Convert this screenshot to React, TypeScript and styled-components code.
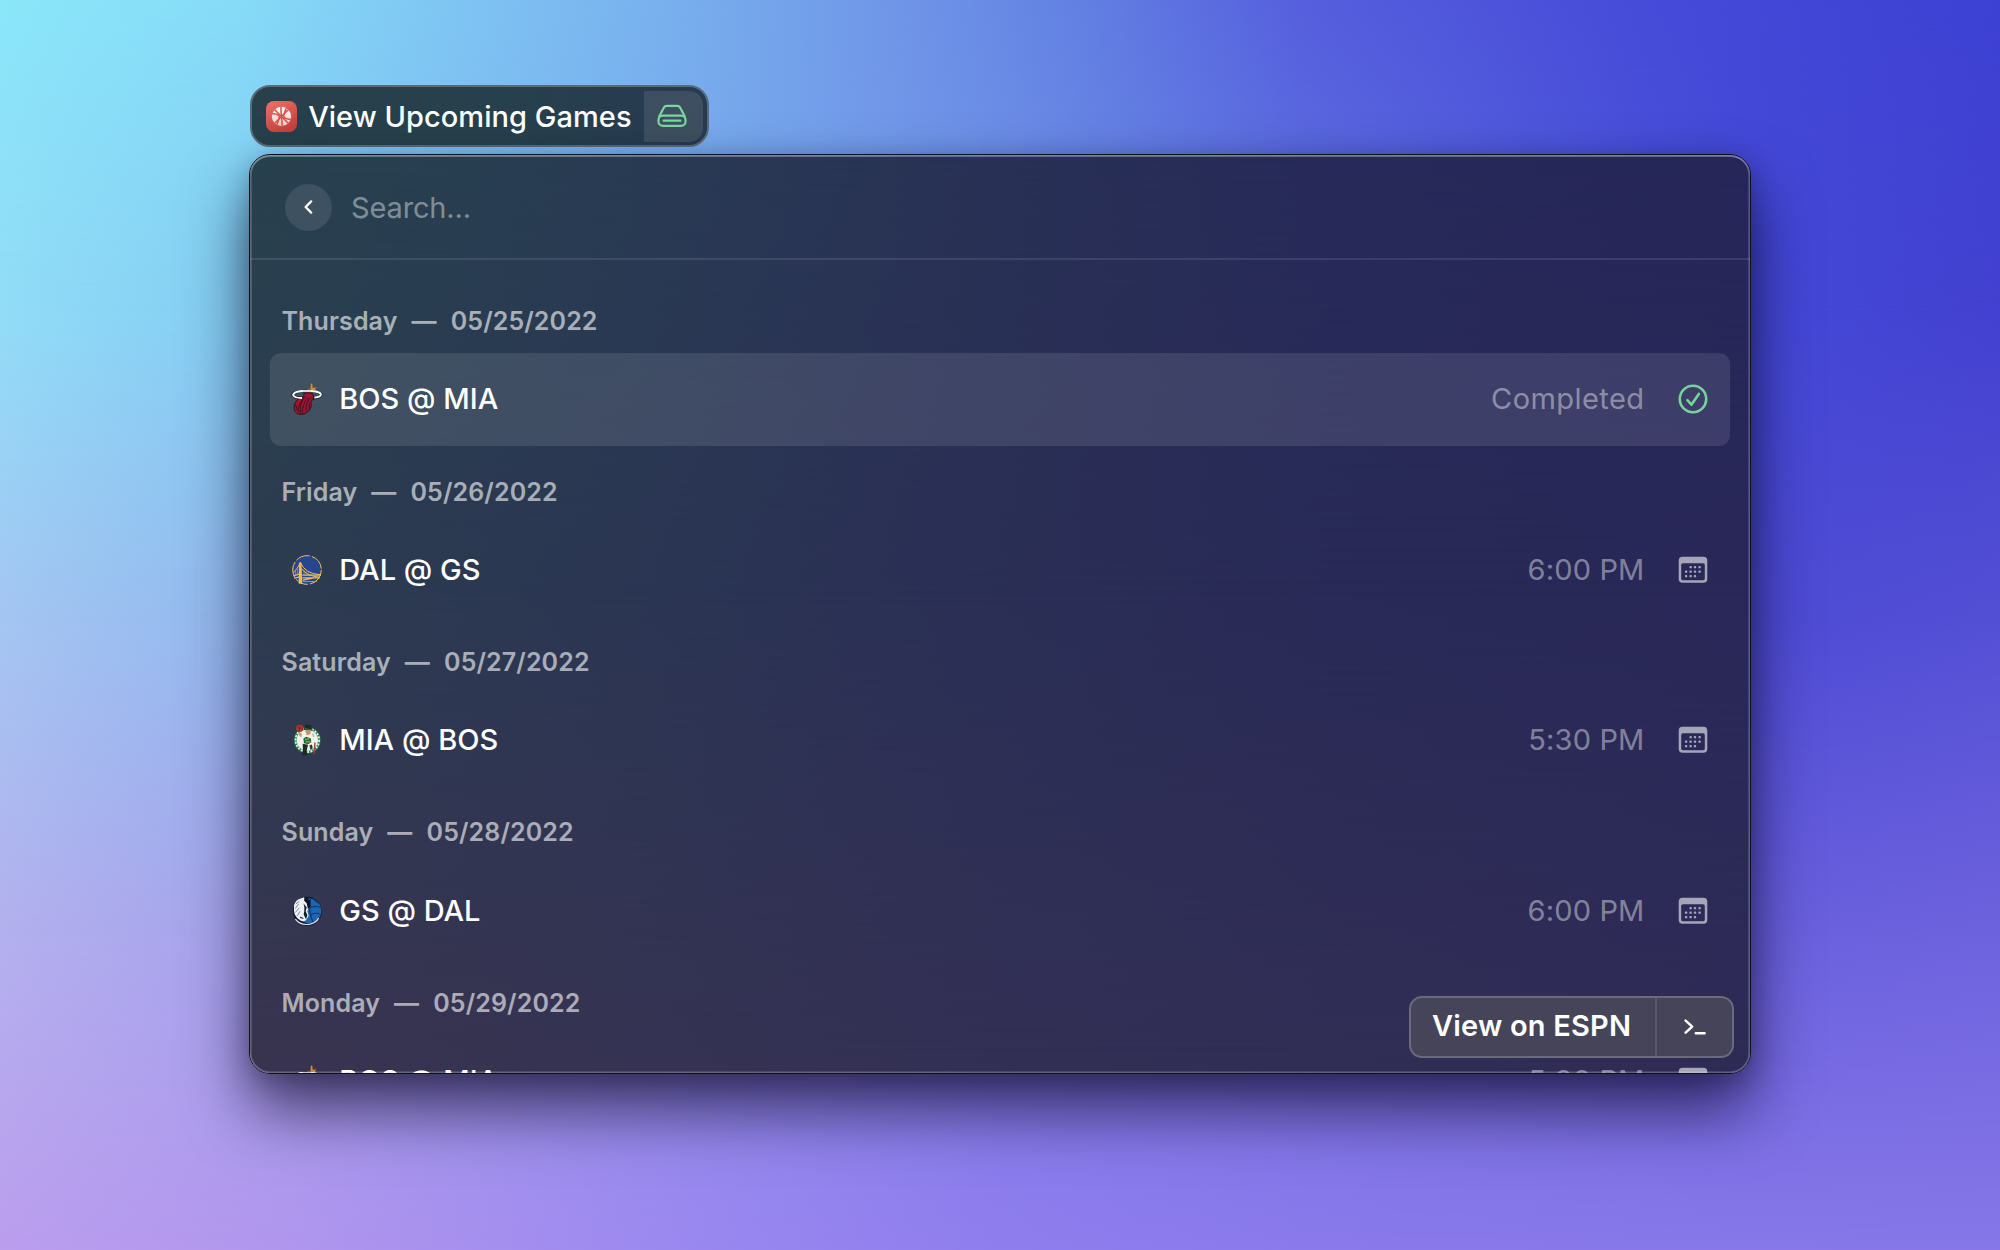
import React from "react";
import styled, { createGlobalStyle } from "styled-components";

const GlobalStyle = createGlobalStyle`
  *, *::before, *::after { box-sizing: border-box; }
  html, body { margin: 0; padding: 0; }
  body {
    font-family: Inter, "Liberation Sans", sans-serif;
    -webkit-font-smoothing: antialiased;
    background: #4f4bd3;
  }
`;

/* ---------- colour mesh ---------- */

type MeshStop = { at: number; colors: string };

/* Each band is a horizontal gradient that is solid down to its own height and fades into the band beneath it. */
const MeshLayer = styled.div<{ $colors: string; $from: number; $to: number }>`
  position: absolute;
  inset: 0;
  background: linear-gradient(90deg, ${(p) => p.$colors});
  mask-image: ${(p) =>
    p.$to > 100 ? "none" : `linear-gradient(180deg, #000 ${p.$from}%, transparent ${p.$to}%)`};
`;

const MeshBox = styled.div<{ $radius: number }>`
  position: absolute;
  inset: 0;
  z-index: -1;
  overflow: hidden;
  border-radius: ${(p) => p.$radius}px;
`;

function Mesh({ stops, radius = 0 }: { stops: MeshStop[]; radius?: number }) {
  const layers = stops.map((s, i) => ({ ...s, next: stops[i + 1]?.at ?? 101 })).reverse();
  return (
    <MeshBox $radius={radius}>
      {layers.map((l) => (
        <MeshLayer key={l.at} $colors={l.colors} $from={l.at} $to={l.next} />
      ))}
    </MeshBox>
  );
}

const desktopMesh: MeshStop[] = [
  { at: 0, colors: "#8ae6f9 0%, #86dbf7 12%, #80caf4 20%, #78aeed 34%, #6f95e7 45%, #6280e2 54%, #565fdd 65%, #474bd8 82%, #3d41d3 100%" },
  { at: 25, colors: "#92dcf7 0%, #84cdf3 12%, #7090e8 50%, #4449d7 87%, #4341d0 100%" },
  { at: 50, colors: "#a5c5f2 0%, #93b8ee 12%, #7080e6 50%, #4e4bd5 87%, #5450d5 100%" },
  { at: 75, colors: "#b4b0ee 0%, #a6a2ec 12%, #8078e8 50%, #6a60de 87%, #6e63de 100%" },
  { at: 100, colors: "#bb9eee 0%, #b096ee 15%, #9a88f0 35%, #8f7eee 50%, #8979eb 70%, #8777e8 100%" },
];

const windowMesh: MeshStop[] = [
  { at: 0, colors: "#28414e 0%, #283e51 16%, #293854 32%, #283055 52%, #272a59 72%, #262659 100%" },
  { at: 48, colors: "#2d3c50 0%, #2b3653 26%, #2b3055 44%, #292a57 72%, #292858 100%" },
  { at: 100, colors: "#393450 0%, #363353 26%, #333055 50%, #312e56 78%, #2f2b57 100%" },
];

/* ---------- layout ---------- */

const Desktop = styled.main`
  position: relative;
  z-index: 0;
  width: 2000px;
  height: 1250px;
  padding: 85px 249px 0;
  display: flex;
  flex-direction: column;
  align-items: flex-start;
  gap: 7px;
  overflow: hidden;
`;

const CommandPill = styled.div`
  display: flex;
  align-items: center;
  width: 458.5px;
  height: 62px;
  margin-left: 1.3px;
  padding: 0 4px 0 13.7px;
  border: 2px solid #5a6b76;
  border-radius: 20px;
  background: linear-gradient(90deg, #27404b 0%, #27404d 60%, #273a51 100%);
`;

const PillTitle = styled.span`
  flex: 1;
  margin-left: 11.2px;
  padding-top: 1px;
  font-size: 29px;
  font-weight: 500;
  line-height: 36px;
  letter-spacing: 0.04px;
  white-space: nowrap;
  color: #fff;
`;

const PillAccessory = styled.div`
  display: flex;
  align-items: center;
  justify-content: center;
  width: 58.5px;
  height: 51px;
  padding-right: 4px;
  border-radius: 0 14px 14px 0;
  background: #3d4f60;
`;

const Window = styled.section`
  position: relative;
  z-index: 0;
  width: 1502px;
  height: 920px;
  display: flex;
  flex-direction: column;
  border: 1px solid #0d1020;
  border-radius: 21px;
  box-shadow: 0 36px 64px rgba(8, 4, 30, 0.64), 0 6px 26px rgba(8, 4, 30, 0.24);
`;

const Clip = styled.div`
  flex: 1;
  min-height: 0;
  display: flex;
  flex-direction: column;
  overflow: hidden;
  border-radius: 20px;
  box-shadow: inset 0 0 0 1.6px rgba(255, 255, 255, 0.24), inset 0 2px 0 rgba(255, 255, 255, 0.2);
`;

const SearchBar = styled.header`
  flex: none;
  display: flex;
  align-items: center;
  height: 105px;
  padding: 1px 35px 0;
  border-bottom: 2px solid rgba(255, 255, 255, 0.1);
`;

const BackButton = styled.button`
  display: flex;
  align-items: center;
  justify-content: center;
  width: 47px;
  height: 47px;
  padding: 0;
  border: 0;
  border-radius: 50%;
  background: #3e5160;
`;

const SearchInput = styled.div`
  margin-left: 19px;
  padding-top: 1px;
  font-size: 29px;
  line-height: 36px;
  letter-spacing: -0.15px;
  color: rgba(255, 255, 255, 0.43);
`;

const Sections = styled.div`
  flex: 1;
  min-height: 0;
  overflow: hidden;
  padding: 15.4px 20px 0;
`;

const SectionTitle = styled.h2`
  display: flex;
  align-items: center;
  height: 77.7px;
  margin: 0;
  padding: 13.8px 0 0 11.5px;
  font-size: 25px;
  font-weight: 600;
  line-height: 32px;
  letter-spacing: 0.12px;
  word-spacing: 0.6px;
  white-space: pre;
  color: rgba(255, 255, 255, 0.6);
`;

const Row = styled.div<{ $selected?: boolean }>`
  display: flex;
  align-items: center;
  height: 92.7px;
  padding: 0 21.6px 0 22px;
  border-radius: 11px;
  background: ${(p) => (p.$selected ? "rgba(255, 255, 255, 0.105)" : "transparent")};
`;

const Matchup = styled.span`
  flex: 1;
  margin-left: 17.2px;
  font-size: 29px;
  font-weight: 500;
  line-height: 36px;
  letter-spacing: 0.02px;
  color: #fff;
`;

const Status = styled.span<{ $spacing: number }>`
  margin-right: 34px;
  font-size: 29px;
  line-height: 36px;
  letter-spacing: ${(p) => p.$spacing}px;
  color: rgba(255, 255, 255, 0.43);
`;

const ActionBar = styled.div`
  position: absolute;
  right: 16px;
  bottom: 15.5px;
  display: flex;
  width: 325.5px;
  height: 62px;
  border: 2px solid #6b6a7d;
  border-radius: 13px;
  background: #454459;
`;

const ActionLabel = styled.span`
  flex: 1;
  padding-left: 21.4px;
  font-size: 29px;
  font-weight: 600;
  line-height: 56px;
  letter-spacing: 0.2px;
  white-space: nowrap;
  color: #fff;
`;

const ActionKey = styled.span`
  display: flex;
  align-items: center;
  justify-content: center;
  width: 77px;
  border-left: 2px solid #5a596c;
`;

const Icon = styled.svg`
  display: block;
  flex: none;
  overflow: visible;
`;

/* ---------- icons ---------- */

const AppIcon = () => (
  <Icon width="31" height="31" viewBox="0 0 31 31">
    <defs>
      <linearGradient id="app-icon" x1="0" y1="0" x2="0.5" y2="1">
        <stop offset="0" stopColor="#f0706a" />
        <stop offset="1" stopColor="#c4423c" />
      </linearGradient>
      <linearGradient id="app-ball-fill" x1="0" y1="0" x2="0" y2="1">
        <stop offset="0" stopColor="#ffffff" />
        <stop offset="1" stopColor="#f3c4c1" />
      </linearGradient>
      <clipPath id="app-ball">
        <circle cx="15.5" cy="15.5" r="9.8" />
      </clipPath>
    </defs>
    <rect width="31" height="31" rx="8" fill="url(#app-icon)" />
    <circle cx="15.5" cy="15.5" r="9.7" fill="url(#app-ball-fill)" />
    <g clipPath="url(#app-ball)" stroke="#d8504a" strokeWidth="1.5" fill="none">
      <path d="M7.5 7.5 23.5 23.5M23.5 7.5 7.5 23.5" />
      <path d="M15 4.5Q14.8 9.5 15.5 15.5Q16.2 21.5 16 26.5" />
      <path d="M4.5 12.6Q10.5 12.4 13.2 15Q13.4 18.4 10.2 25M26.5 18.4Q20.5 18.6 17.8 16Q17.6 12.6 20.8 6" />
    </g>
  </Icon>
);

const DriveIcon = () => (
  <Icon width="30" height="24" viewBox="0 0 30 24" fill="none" stroke="#7ad7a0" strokeWidth="2.2" strokeLinejoin="round" strokeLinecap="round">
    <path d="M2.2 12.6 6.9 3.6Q7.9 1.8 9.9 1.8H20.1Q22.1 1.8 23.1 3.6L27.8 12.6" />
    <rect x="1.5" y="11.6" width="27" height="10.2" rx="4.4" />
    <path d="M6.6 16.7H23.4" />
  </Icon>
);

const ChevronIcon = () => (
  <Icon width="9" height="14" viewBox="0 0 9 14" fill="none" stroke="#fff" strokeWidth="2.3" strokeLinecap="round" strokeLinejoin="round">
    <path d="M7.2 1.4 1.6 7 7.2 12.6" />
  </Icon>
);

const CheckIcon = () => (
  <Icon width="30" height="30" viewBox="0 0 30 30" fill="none" stroke="#76d49b" strokeWidth="2.6" strokeLinecap="round" strokeLinejoin="round">
    <circle cx="15" cy="15" r="13.2" />
    <path d="M9.4 16.2 13.4 20.7 20.8 9.9" />
  </Icon>
);

const calendarDots: [number, number][] = [
  [12.6, 11.2], [17, 11.2], [21.6, 11.2],
  [8.1, 15.7], [12.6, 15.7], [17, 15.7], [21.6, 15.7],
  [8.1, 20.2], [12.6, 20.2], [17, 20.2],
];

const CalendarIcon = () => (
  <Icon width="30" height="28" viewBox="0 0 30 28">
    <g opacity="0.58" fill="#fff">
      <path
        fillRule="evenodd"
        d="M4.6.8H25.4Q29.3.8 29.3 4.7V22.8Q29.3 26.7 25.4 26.7H4.6Q.7 26.7.7 22.8V4.7Q.7.8 4.6.8ZM4.9 7.2Q3.2 7.2 3.2 8.9V22.4Q3.2 24.3 5.1 24.3H24.9Q26.8 24.3 26.8 22.4V8.9Q26.8 7.2 25.1 7.2Z"
      />
      {calendarDots.map(([x, y]) => (
        <rect key={`${x}-${y}`} x={x - 1.15} y={y - 1.15} width="2.3" height="2.3" rx="0.6" />
      ))}
    </g>
  </Icon>
);

const TerminalIcon = () => (
  <Icon width="22" height="16" viewBox="0 0 22 16" fill="none" stroke="#fff" strokeWidth="2.5" strokeLinecap="round" strokeLinejoin="round">
    <path d="M1.6 1.7 8.2 7.7 1.6 13.7M11.8 14.2H20.6" />
  </Icon>
);

/* ---------- team logos, drawn on a 90-unit square ---------- */

const HeatLogo = () => (
  <Icon width="30" height="30" viewBox="36 42 90 90">
    <path d="M78 66 84 56 91 59 93 40 97 42 98 53 110 52 104 57 112 62 98 63 92 68Z" fill="#d98f2b" />
    <path d="M84 58 92 64 86 65Z M101 48 103 52 99 54Z" fill="#7a3b22" />
    <ellipse cx="81" cy="74" rx="43" ry="11" fill="none" stroke="#14202b" strokeWidth="8" />
    <path d="M39 75C40 68 52 64 68 63M94 63C112 64 123 69 123 74" stroke="#fff" strokeWidth="5.5" fill="none" />
    <path d="M62 63H97" stroke="#fff" strokeWidth="5" />
    <path d="M71 71Q86 64 99 72L101 84 93 96Q98 110 86 124 73 136 57 133 43 129 42 113 42 99 54 87L72 80Z" fill="#9b1631" stroke="#211019" strokeWidth="2.5" />
    <path d="M77 80Q56 96 54 124M86 82Q66 101 67 131M94 82Q76 96 78 124M46 104Q50 120 63 132M68 88Q58 104 62 126M88 100V116" stroke="#35101f" strokeWidth="2.6" fill="none" />
    <path d="M39 74C40 81 52 84 66 84M103 83C117 82 123 78 123 73" stroke="#fff" strokeWidth="5.5" fill="none" />
  </Icon>
);

const WarriorsLogo = () => (
  <Icon width="30" height="30" viewBox="35 43.5 90 90">
    <circle cx="80" cy="88.5" r="44" fill="#1f3f85" />
    <circle cx="80" cy="88.5" r="41" fill="#26468f" stroke="#2a4591" strokeWidth="2" />
    <circle cx="80" cy="88.5" r="43" fill="none" stroke="#f0bf59" strokeWidth="3" strokeDasharray="58 6 40 5 51 6 44 6 48 6" />
    <path d="M56 66H63L66 130H55Z" fill="#f6bd4d" />
    <path d="M60 66Q74 100 122 103M60 68Q50 86 39 96M61 82Q80 108 118 110" stroke="#f0bb55" strokeWidth="3" fill="none" />
    <path d="M40 106 56 101M66 104 122 104M42 114 56 109M66 112H118M67 119 100 112" stroke="#eebb58" strokeWidth="3.5" fill="none" />
    <path d="M71 87V104M77 92V106M84 96V106M91 99V106M51 84V103M45 91V105" stroke="#d2a85a" strokeWidth="2" />
    <path d="M68 123H110" stroke="#bfa267" strokeWidth="2.5" />
  </Icon>
);

const CelticsLogo = () => (
  <Icon width="30" height="30" viewBox="36 44.5 90 90">
    <circle cx="82" cy="90" r="40" fill="#1f7d48" />
    <circle cx="82" cy="90" r="35.5" fill="none" stroke="#dfeee2" strokeWidth="5.5" strokeDasharray="6 4" />
    <circle cx="82" cy="90" r="32" fill="#f1f2ec" />
    <circle cx="59" cy="54" r="11" fill="#a33a2c" />
    <path d="M51 50 67 58M60 43 57 65" stroke="#5a2018" strokeWidth="1.6" />
    <path d="M73 55 76 43 94 45 95 57Z" fill="#1d2a24" />
    <path d="M70 57 98 60" stroke="#1c3a2a" strokeWidth="3.4" />
    <path d="M75 59H93L91 72 80 75Z" fill="#c9926e" />
    <path d="M58 66 66 70 64 82 57 76Z" fill="#cf9a78" />
    <path d="M70 86 78 80 92 84 94 96 84 102 72 99Z" fill="#1e6b3e" />
    <path d="M75 88 88 86M77 95 91 95" stroke="#d5a757" strokeWidth="3" />
    <path d="M68 101 84 104 80 122 82 136 64 135 69 124Z" fill="#1f2a26" />
    <path d="M88 106 96 103 98 114 92 120Z" fill="#2b3a33" />
    <path d="M103 96 107 98 104 134 100 130Z" fill="#8d4a31" />
    <path d="M96 72 100 68 104 78 100 82Z" fill="#b9bfb6" />
  </Icon>
);

const MavericksLogo = () => (
  <Icon width="30" height="30" viewBox="36 46.5 90 90">
    <circle cx="82" cy="92" r="43.5" fill="#0e1d33" />
    <circle cx="87" cy="91" r="37" fill="#1f66b0" />
    <path d="M92 56Q84 90 99 126M84 84Q106 72 122 82M90 104Q104 94 121 101M103 58Q110 66 121 70" stroke="#0d3a70" strokeWidth="3.4" fill="none" />
    <path d="M42 74Q48 58 60 55L72 50 75 58Q88 62 88 78L82 92 86 106 78 119Q66 126 57 117 42 106 42 90Z" fill="#eef1f3" />
    <path d="M75 50 90 60 92 76 84 86 80 68 72 60Z" fill="#0b1420" />
    <path d="M48 70 58 62M46 84 56 70M46 96 58 82M52 106 60 92" stroke="#7f8b98" strokeWidth="3" />
    <path d="M70 68Q76 82 71 102L78 116 82 104 77 92 80 80Z" fill="#111d2b" />
    <path d="M60 110 70 114" stroke="#27384a" strokeWidth="4" />
    <path d="M46 116Q62 136 90 131 108 127 116 113" stroke="#dfe5ea" strokeWidth="3.6" fill="none" />
  </Icon>
);

/* ---------- data ---------- */

type Game = {
  day: string;
  date: string;
  matchup: string;
  status: string;
  completed?: boolean;
  Logo: () => React.ReactElement;
};

const games: Game[] = [
  { day: "Thursday", date: "05/25/2022", matchup: "BOS @ MIA", status: "Completed", completed: true, Logo: HeatLogo },
  { day: "Friday", date: "05/26/2022", matchup: "DAL @ GS", status: "6:00 PM", Logo: WarriorsLogo },
  { day: "Saturday", date: "05/27/2022", matchup: "MIA @ BOS", status: "5:30 PM", Logo: CelticsLogo },
  { day: "Sunday", date: "05/28/2022", matchup: "GS @ DAL", status: "6:00 PM", Logo: MavericksLogo },
  { day: "Monday", date: "05/29/2022", matchup: "BOS @ MIA", status: "5:30 PM", Logo: HeatLogo },
];

export default function App() {
  return (
    <>
      <GlobalStyle />
      <Desktop>
        <Mesh stops={desktopMesh} />
        <CommandPill>
          <AppIcon />
          <PillTitle>View Upcoming Games</PillTitle>
          <PillAccessory>
            <DriveIcon />
          </PillAccessory>
        </CommandPill>
        <Window>
          <Mesh stops={windowMesh} radius={20} />
          <Clip>
            <SearchBar>
              <BackButton aria-label="Back">
                <ChevronIcon />
              </BackButton>
              <SearchInput>Search...</SearchInput>
            </SearchBar>
            <Sections>
              {games.map(({ day, date, matchup, status, completed, Logo }) => (
                <section key={date}>
                  <SectionTitle>{`${day}  —  ${date}`}</SectionTitle>
                  <Row $selected={completed}>
                    <Logo />
                    <Matchup>{matchup}</Matchup>
                    <Status $spacing={completed ? 0.42 : 0.15}>{status}</Status>
                    {completed ? <CheckIcon /> : <CalendarIcon />}
                  </Row>
                </section>
              ))}
            </Sections>
          </Clip>
          <ActionBar>
            <ActionLabel>View on ESPN</ActionLabel>
            <ActionKey>
              <TerminalIcon />
            </ActionKey>
          </ActionBar>
        </Window>
      </Desktop>
    </>
  );
}
